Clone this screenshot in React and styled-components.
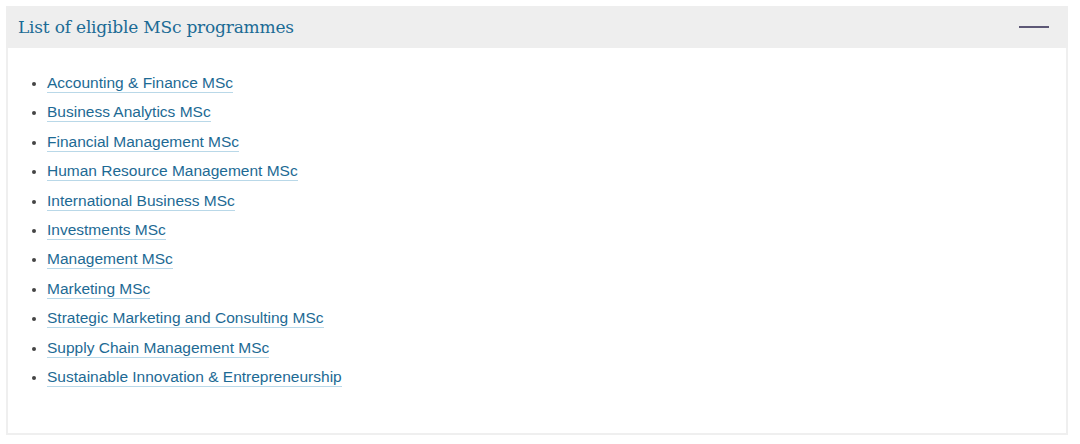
import React, { useState } from 'react';
import styled, { createGlobalStyle } from 'styled-components';

const GlobalStyle = createGlobalStyle`
  body {
    margin: 0;
    background: #fff;
    font-family: 'Liberation Sans', Arial, sans-serif;
  }
`;

const programmes = [
  'Accounting & Finance MSc',
  'Business Analytics MSc',
  'Financial Management MSc',
  'Human Resource Management MSc',
  'International Business MSc',
  'Investments MSc',
  'Management MSc',
  'Marketing MSc',
  'Strategic Marketing and Consulting MSc',
  'Supply Chain Management MSc',
  'Sustainable Innovation & Entrepreneurship',
];

const Page = styled.div`
  padding: 6px 12px 0 6px;
`;

const Panel = styled.section`
  width: 1062px;
`;

const Header = styled.button`
  display: flex;
  align-items: center;
  justify-content: space-between;
  width: 100%;
  height: 42px;
  padding: 0 19px 0 12px;
  border: none;
  background: #eeeeee;
  cursor: pointer;
  text-align: left;
`;

const Title = styled.h3`
  margin: 0;
  font-family: 'DejaVu Serif', Georgia, serif;
  font-weight: normal;
  font-size: 17px;
  letter-spacing: -0.2px;
  color: #1b6b95;
`;

const Toggle = styled.span`
  display: block;
  width: 30px;
  height: 2px;
  background: #5d5876;
`;

const Body = styled.div`
  border: 2px solid #efefef;
  border-top: none;
  padding: 20px 0 42px 0;
`;

const List = styled.ul`
  margin: 0;
  padding-left: 39px;
  list-style: disc;
  color: #444;
`;

const Item = styled.li`
  font-size: 15.5px;
  line-height: 29.4px;
  &::marker {
    font-size: 14px;
  }
`;

const Link = styled.a`
  color: #1d6a94;
  text-decoration: none;
  border-bottom: 1px solid #b9d8e8;
  padding-bottom: 1px;
`;

export default function App() {
  const [open, setOpen] = useState(true);
  return (
    <>
      <GlobalStyle />
      <Page>
        <Panel>
          <Header onClick={() => setOpen(!open)}>
            <Title>List of eligible MSc programmes</Title>
            <Toggle />
          </Header>
          {open && (
            <Body>
              <List>
                {programmes.map((p) => (
                  <Item key={p}>
                    <Link href="#">{p}</Link>
                  </Item>
                ))}
              </List>
            </Body>
          )}
        </Panel>
      </Page>
    </>
  );
}
